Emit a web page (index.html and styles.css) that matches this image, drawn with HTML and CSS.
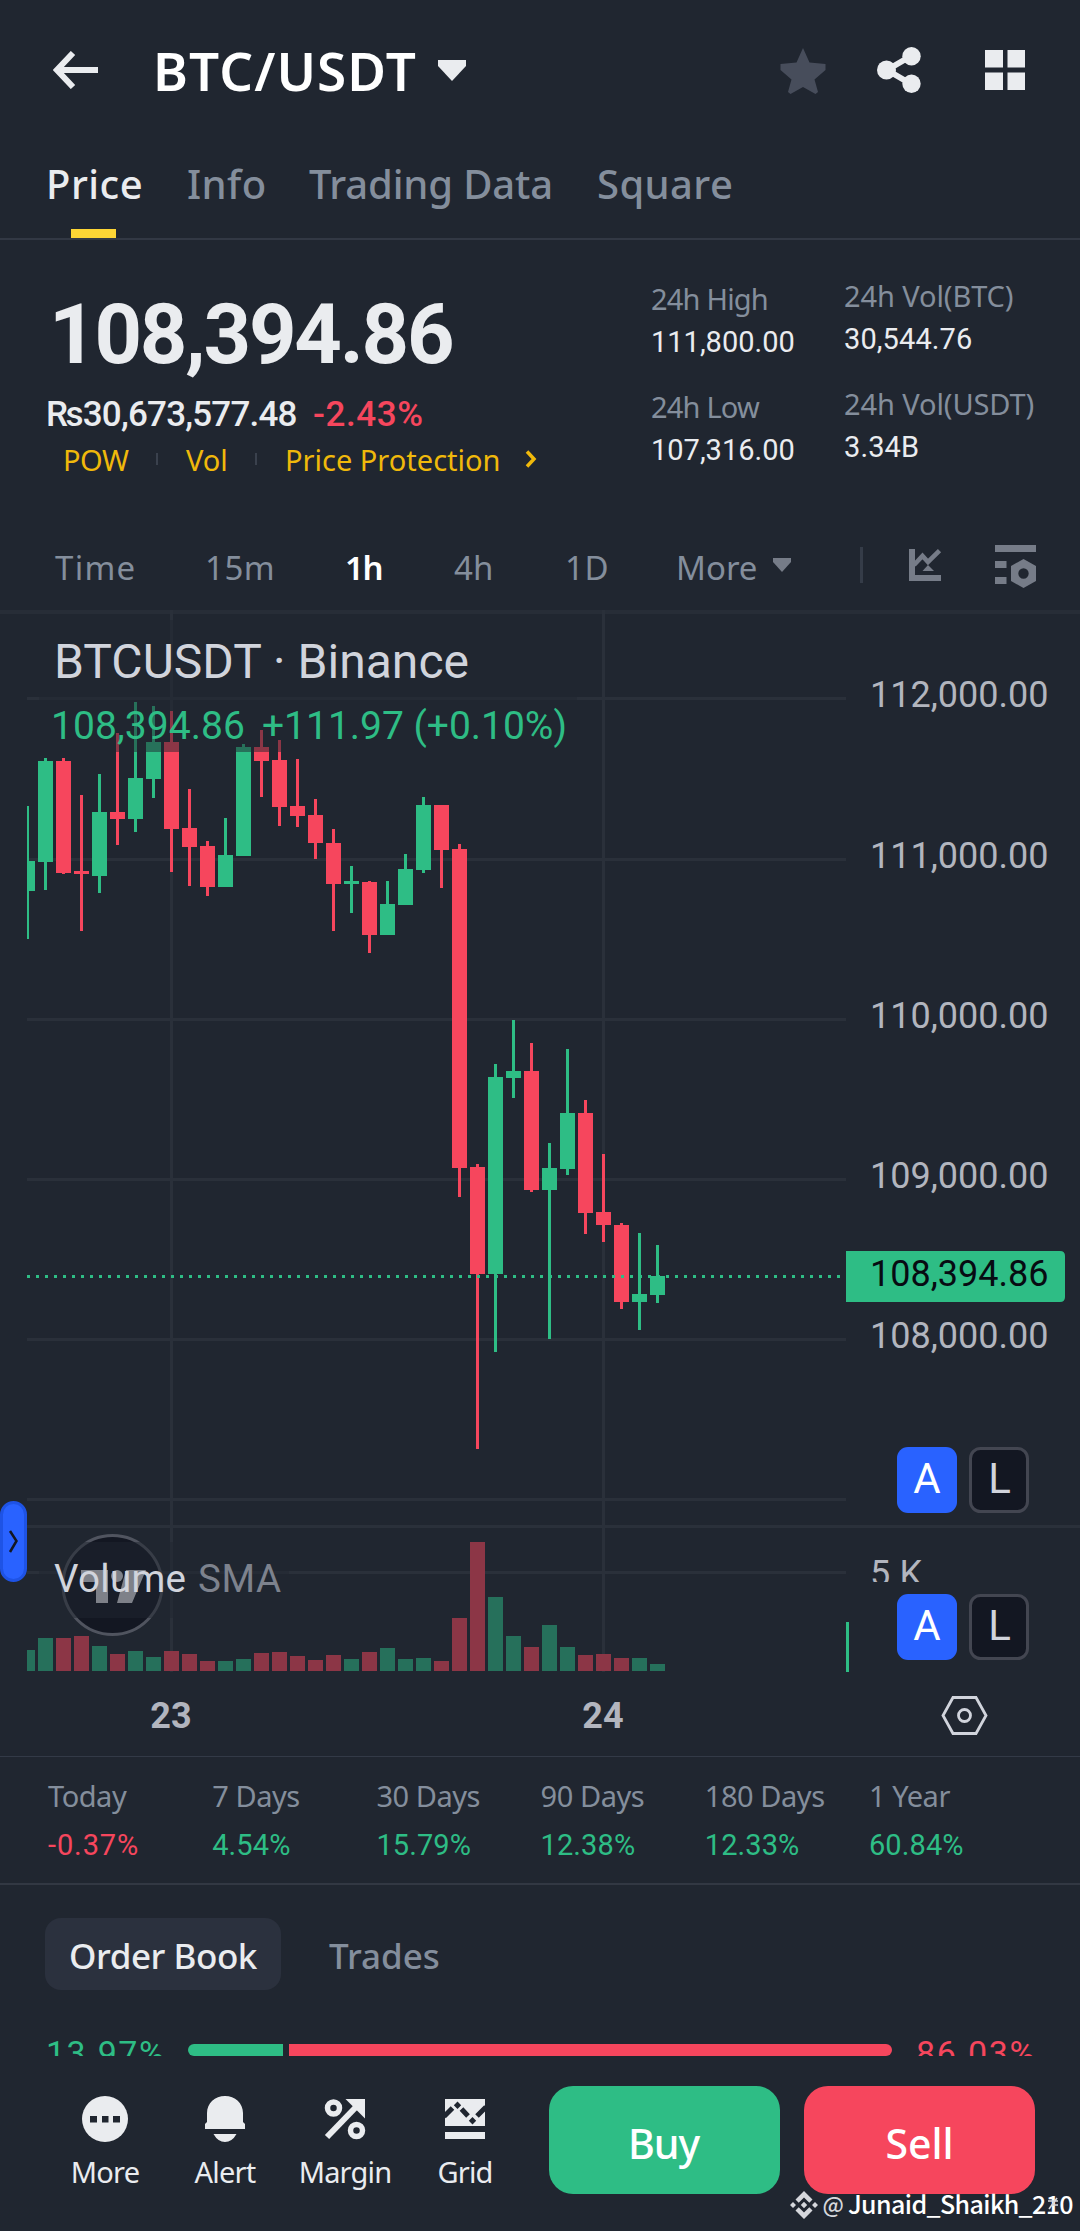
FILE: index.html
```html
<!DOCTYPE html>
<html lang="en">
<head>
<meta charset="utf-8">
<title>BTC/USDT</title>
<link rel="stylesheet" href="styles.css">
</head>
<body>
<main class="app">
  <header class="topbar">
    <svg class="icon-back" width="46" height="38" viewBox="0 0 46 38"><path d="M3 19H45M20 2L4 19L20 36" fill="none" stroke="#eaecef" stroke-width="6"/></svg>
    <h1 class="pair">BTC/USDT</h1>
    <svg class="pair-caret" width="28" height="21" viewBox="0 0 28 21"><path d="M0 0H28V6L14 21L0 6Z" fill="#eaecef"/></svg>
    <div class="topbar-actions">
      <svg width="46" height="46" viewBox="0 0 46 46"><path d="M23 0L29.5 14.5L45.5 16V22L34.5 31.500L38 44L35.500 46L23 39L10.500 46L8 44L11.500 31.500L0.500 22V16L16.500 14.500Z" fill="#474d5b"/></svg>
      <svg width="44" height="46" viewBox="0 0 44 46"><path d="M10 23L34 9M10 23L34 37" stroke="#eaecef" stroke-width="6"/><circle cx="9.500" cy="23" r="9.500" fill="#eaecef"/><circle cx="34.500" cy="9.200" r="9.200" fill="#eaecef"/><circle cx="34.500" cy="36.800" r="9.200" fill="#eaecef"/></svg>
      <svg width="40" height="40" viewBox="0 0 40 40"><path d="M0 0H18V17.500H0ZM22.500 0H40V17.500H22.500ZM0 22.500H18V40H0ZM22.500 22.500H40V40H22.500Z" fill="#eaecef"/></svg>
    </div>
  </header>

  <nav class="tabs">
    <a class="tab tab-price active">Price</a>
    <a class="tab tab-info">Info</a>
    <a class="tab tab-data">Trading Data</a>
    <a class="tab tab-square">Square</a>
  </nav>

  <section class="summary">
    <div class="summary-main">
      <div class="last-price">108,394.86</div>
      <div class="fiat"><span class="fiat-value">₨30,673,577.48</span><span class="fiat-change">-2.43%</span></div>
      <div class="tags">
        <span class="tag-pow">POW</span><i class="tag-sep"></i><span class="tag-vol">Vol</span><i class="tag-sep"></i><span class="tag-protect">Price Protection</span>
        <svg width="12" height="18" viewBox="0 0 12 18"><path d="M2 1.500L9 9L2 16.500" fill="none" stroke="#f0b90b" stroke-width="3.500"/></svg>
      </div>
    </div>
    <div class="stats stats-range">
      <div class="stat"><span class="stat-label">24h High</span><span class="stat-value">111,800.00</span></div>
      <div class="stat"><span class="stat-label">24h Low</span><span class="stat-value">107,316.00</span></div>
    </div>
    <div class="stats stats-volume">
      <div class="stat"><span class="stat-label">24h Vol(BTC)</span><span class="stat-value">30,544.76</span></div>
      <div class="stat"><span class="stat-label">24h Vol(USDT)</span><span class="stat-value">3.34B</span></div>
    </div>
  </section>

  <nav class="intervals">
    <a class="iv-time">Time</a><a class="iv-15m">15m</a><a class="iv-1h active">1h</a><a class="iv-4h">4h</a><a class="iv-1d">1D</a><a class="iv-more">More</a>
    <svg class="iv-caret" width="18" height="14" viewBox="0 0 18 14"><path d="M0 0H18V4L9 14L0 4Z" fill="#767c88"/></svg>
    <i class="iv-sep"></i>
    <svg class="iv-chart" width="34" height="34" viewBox="0 0 34 34"><path d="M3 1V30H32" fill="none" stroke="#767c88" stroke-width="6"/><path d="M5 17L13.500 8L19 14L30.500 2.700" fill="none" stroke="#767c88" stroke-width="4.600"/><path d="M19 17L25 23H13.500Z" fill="#767c88"/></svg>
    <svg class="iv-settings" width="42" height="43" viewBox="0 0 42 43"><path d="M0 0H41V7H0ZM0 16H11.500V23H0ZM0 32H11.500V39H0Z" fill="#767c88"/><path fill-rule="evenodd" d="M28.500 14L41 21V36L28.500 43L16 36V21ZM28.500 23.300A5.200 5.200 0 1 0 28.500 33.700A5.200 5.200 0 1 0 28.500 23.300Z" fill="#767c88"/></svg>
  </nav>

  <section class="chart">
    <svg id="chart" width="1080" height="1147" viewBox="0 610 1080 1147">
      <g fill="#2a303a">
        <rect x="0" y="610" width="1080" height="4" fill="#272d37"/>
        <rect x="27" y="697" width="819" height="3"/>
        <rect x="27" y="858" width="819" height="3"/>
        <rect x="27" y="1018" width="819" height="3"/>
        <rect x="27" y="1178" width="819" height="3"/>
        <rect x="27" y="1338" width="819" height="3"/>
        <rect x="27" y="1498" width="819" height="3"/>
        <rect x="27" y="1525" width="1053" height="3"/>
        <rect x="27" y="1571" width="819" height="3"/>
        <rect x="170" y="610" width="3" height="1062"/>
        <rect x="602" y="610" width="3" height="1062"/>
      </g>
      <circle cx="112.500" cy="1585" r="49.500" fill="#131722" stroke="#50545f" stroke-width="3"/>
      <path d="M81 1570H108V1603H96V1582H81ZM126 1570H146L132 1603H117Z" fill="#dcdde2"/>
      <circle cx="117" cy="1576" r="6" fill="#dcdde2"/>
      <g id="series"></g>
      <path d="M27 1276.500H842" stroke="#2ebd85" stroke-width="3" stroke-dasharray="3 6"/>
      <g fill="#202630" fill-opacity=".5">
        <rect x="39" y="620" width="441" height="77"/>
        <rect x="39" y="697" width="538" height="55"/>
        <rect x="39" y="1542" width="250" height="76"/>
      </g>
      <g class="chart-text">
        <text x="54" y="678" font-size="48" textLength="415" fill="#d1d4dc">BTCUSDT · Binance</text>
        <text x="51" y="739" font-size="39" textLength="194" fill="#2ebd85">108,394.86</text>
        <text x="262" y="739" font-size="39" textLength="305" fill="#2ebd85">+111.97 (+0.10%)</text>
        <text x="54" y="1592" font-size="38.500" textLength="132" fill="#d1d4dc">Volume</text>
        <text x="198" y="1592" font-size="38.500" textLength="83" fill="#7d828d">SMA</text>
        <g fill="#b2b5be" font-size="36">
          <text x="870" y="707" textLength="178.500">112,000.00</text>
          <text x="870" y="868" textLength="178.500">111,000.00</text>
          <text x="870" y="1028" textLength="178.500">110,000.00</text>
          <text x="870" y="1188" textLength="178.500">109,000.00</text>
          <text x="870" y="1348" textLength="178.500">108,000.00</text>
          <text x="870" y="1586" textLength="52">5 K</text>
          <text x="171" y="1728" text-anchor="middle" font-weight="700">23</text>
          <text x="603" y="1728" text-anchor="middle" font-weight="700">24</text>
        </g>
        <rect x="860" y="1582" width="80" height="12" fill="#202630"/>
        <path d="M846 1251H1060Q1065 1251 1065 1256V1297Q1065 1302 1060 1302H846Z" fill="#2ebd85"/>
        <text x="870" y="1286" font-size="36" textLength="178.500" fill="#070b12">108,394.86</text>
        <g id="scale-price" font-size="42" text-anchor="middle">
          <rect x="897" y="1447" width="60" height="66" rx="11" fill="#2962ff"/>
          <rect x="970.500" y="1448.500" width="57" height="63" rx="10" fill="#131722" stroke="#434651" stroke-width="3"/>
          <text x="927" y="1493" fill="#ffffff">A</text><text x="999.500" y="1493" fill="#d1d4dc">L</text>
        </g>
        <g id="scale-volume" font-size="42" text-anchor="middle">
          <rect x="897" y="1594" width="60" height="66" rx="11" fill="#2962ff"/>
          <rect x="970.500" y="1595.500" width="57" height="63" rx="10" fill="#131722" stroke="#434651" stroke-width="3"/>
          <text x="927" y="1640" fill="#ffffff">A</text><text x="999.500" y="1640" fill="#d1d4dc">L</text>
        </g>
      </g>
      <rect x="846" y="1622" width="3" height="50" fill="#2ebd85"/>
      <path d="M953 1697.500H976L986 1715.500L976 1733.500H953L943 1715.500Z" fill="none" stroke="#d1d4dc" stroke-width="2.800"/>
      <circle cx="964.500" cy="1715.500" r="6" fill="none" stroke="#d1d4dc" stroke-width="2.800"/>
      <rect x="1.500" y="1502.500" width="24" height="78" rx="12" fill="#2962ff" stroke="#1e53e5" stroke-width="3"/>
      <path d="M10 1531L16.500 1541L10 1552" fill="none" stroke="#131722" stroke-width="2.500"/>
    </svg>
  </section>

  <section class="returns">
    <div class="ret"><span>Today</span><b class="down">-0.37%</b></div>
    <div class="ret"><span>7 Days</span><b>4.54%</b></div>
    <div class="ret"><span>30 Days</span><b>15.79%</b></div>
    <div class="ret"><span>90 Days</span><b>12.38%</b></div>
    <div class="ret"><span>180 Days</span><b>12.33%</b></div>
    <div class="ret"><span>1 Year</span><b>60.84%</b></div>
  </section>

  <nav class="book-tabs"><a class="book-tab active">Order Book</a><a class="book-tab">Trades</a></nav>

  <section class="depth">
    <span class="depth-buy">13.97%</span>
    <div class="depth-bar"><i class="bar-buy"></i><i class="bar-sell"></i></div>
    <span class="depth-sell">86.03%</span>
  </section>

  <footer class="bottombar">
    <a class="tool">
      <svg width="46" height="46" viewBox="0 0 46 46"><circle cx="23" cy="23" r="23" fill="#eaecef"/><path d="M8 20H15V26.500H8ZM20 20H26.500V26.500H20ZM31 20H38V26.500H31Z" fill="#202630"/></svg>
      <span>More</span></a>
    <a class="tool">
      <svg width="46" height="46" viewBox="0 0 46 46"><path d="M5 17C5 7 13 0 23 0S41 7 41 17V26L43 28V33H3V28L5 26ZM11.500 38H34.500Q30 46 23 46T11.500 38Z" fill="#eaecef"/></svg>
      <span>Alert</span></a>
    <a class="tool">
      <svg width="46" height="46" viewBox="0 0 46 46"><circle cx="11.500" cy="12" r="6" fill="none" stroke="#eaecef" stroke-width="5.500"/><circle cx="34.500" cy="34.500" r="6" fill="none" stroke="#eaecef" stroke-width="5.500"/><path d="M5 41L34 11" stroke="#eaecef" stroke-width="6"/><path d="M23.500 3H43V22.500Z" fill="#eaecef"/></svg>
      <span>Margin</span></a>
    <a class="tool">
      <svg width="46" height="46" viewBox="0 0 46 46"><path d="M3 3H43V30H3ZM3 36H43V43H3Z" fill="#eaecef"/><path d="M2 20.500L10.500 12M19.500 13L26 20M35 20L44 11" fill="none" stroke="#202630" stroke-width="5"/><path d="M15.500 5.500L19.200 9.200L15.500 12.900L11.800 9.200ZM30.500 21L34.200 24.700L30.500 28.400L26.800 24.700Z" fill="#202630"/></svg>
      <span>Grid</span></a>
    <button class="trade buy">Buy</button>
    <button class="trade sell">Sell</button>
  </footer>

  <div class="watermark">
    <svg width="28" height="28" viewBox="0 0 28 28"><path d="M14 0L22.500 8.500L19.300 11.700L14 6.400L8.700 11.700L5.500 8.500ZM14 28L22.500 19.500L19.300 16.300L14 21.600L8.700 16.300L5.500 19.500ZM3 11L6 14L3 17L0 14ZM25 11L28 14L25 17L22 14ZM14 10.800L17.200 14L14 17.200L10.800 14Z" fill="#d5d7dc"/></svg>
    <span class="wm-at">@</span><span class="wm-name">Junaid_Shaikh_210</span>
    <svg class="wm-mark" width="12" height="14" viewBox="0 0 12 14"><path d="M10 1L2 12M1 4H11M5 8H11" stroke="#d5d7dc" stroke-width="1.600"/></svg>
  </div>
</main>
<script src="chart.js"></script>
</body>
</html>
```
FILE: styles.css
```css
* { box-sizing: border-box; }
body { margin: 0; background: #202630; }
.app {
  position: relative; width: 1080px; height: 2231px; overflow: hidden;
  display: flex; flex-direction: column;
  background: #202630; color: #eaecef;
  font-family: "Noto Sans", "Open Sans", sans-serif;
}
.app > * { flex: none; }
svg { display: block; flex: none; }
a, span { white-space: nowrap; }

.topbar { height: 140px; display: flex; align-items: center; padding: 0 55px 0 53px; }
.pair { margin: 0 0 0 54px; width: 285px; font-size: 53px; line-height: 72px; font-weight: 600; color: #fff; letter-spacing: 1.1px; padding-top: 2px; }
.topbar-actions { margin-left: auto; display: flex; align-items: center; gap: 53px; }
.topbar-actions svg:first-child { margin-right: -2px; margin-top: 2px; }
.topbar-actions svg:last-child { margin-left: 11px; }

.tabs { height: 100px; display: flex; padding-left: 46px; border-bottom: 2px solid #323844; }
.tab { position: relative; height: 98px; font-size: 40px; line-height: 88px; font-weight: 500; color: #848e9c; }
.tab.active { color: #eaecef; letter-spacing: .5px; }
.tab.active::after { content: ""; position: absolute; left: 25px; bottom: 0; width: 45px; height: 9px; background: #fdd535; }
.tab-price { width: 141px; }
.tab-info { width: 122px; letter-spacing: .4px; }
.tab-data { width: 288px; letter-spacing: -.15px; }
.tab-square { letter-spacing: .4px; }

.summary { height: 270px; display: flex; }
.summary-main { width: 651px; padding-left: 46px; }
.last-price { height: 112px; padding: 42px 0 0 3px; font: 700 83px/106px Roboto, sans-serif; letter-spacing: -2.200px; }
.fiat { display: flex; gap: 16px; margin-top: 41px; height: 44px; font: 500 35px/44px Roboto, sans-serif; }
.fiat-value { width: 251px; letter-spacing: -.8px; }
.fiat-change { color: #f6465d; letter-spacing: .6px; }
.tags { display: flex; align-items: center; height: 48px; padding-left: 17px; margin-top: -2px; font-size: 29px; color: #f0b90b; }
.tag-sep { width: 2px; height: 12px; background: #3a414d; }
.tag-pow { width: 93px; letter-spacing: -.5px; }
.tag-vol { width: 69px; margin-left: 28px; }
.tag-protect { width: 240px; margin-left: 28px; }
.stats { display: flex; flex-direction: column; }
.stats-range { width: 193px; padding-top: 38px; }
.stats-volume { padding-top: 35px; }
.stat { display: flex; flex-direction: column; height: 108px; }
.stat-label { font-size: 29px; line-height: 42px; color: #848e9c; letter-spacing: -.8px; }
.stats-volume .stat-label { letter-spacing: -.1px; }
.stat-value { margin-top: 1px; font: 400 29px/42px Roboto, sans-serif; color: #eaecef; }
.stats-volume .stat-value { letter-spacing: .1px; }

.intervals { height: 100px; display: flex; padding-left: 55px; font-size: 33px; line-height: 116px; color: #848e9c; }
.intervals .active { color: #fff; font-weight: 600; letter-spacing: -1.500px; }
.iv-time { width: 150px; letter-spacing: 1.300px; }
.iv-15m { width: 140px; letter-spacing: .5px; }
.iv-1h { width: 109px; }
.iv-4h { width: 111px; }
.iv-1d { width: 111px; letter-spacing: .5px; }
.iv-more { width: 97px; }
.iv-caret { margin-top: 48px; }
.iv-sep { width: 3px; height: 36px; margin: 37px 46px 0 69px; background: #353c48; }
.iv-chart { margin-top: 38px; }
.iv-settings { margin: 35px 0 0 52px; }

.chart { height: 1147px; border-bottom: 1px solid #333a47; }
.chart-text { font-family: Roboto, sans-serif; }

.returns { height: 128px; display: grid; grid-template-columns: repeat(6, 164.200px); padding: 18px 0 0 48px; border-bottom: 2px solid #323843; }
.ret { display: flex; flex-direction: column; font-size: 29px; line-height: 42px; color: #848e9c; letter-spacing: -.45px; }
.ret b { margin-top: 7px; font: 400 29px/42px Roboto, sans-serif; color: #2ebd85; letter-spacing: .1px; }
.ret .down { color: #f6465d; letter-spacing: .9px; }

.book-tabs { display: flex; padding: 33px 0 0 45px; height: 150px; }
.book-tab { height: 72px; padding: 0 24px; border-radius: 16px; font-size: 35px; line-height: 75px; font-weight: 500; color: #848e9c; margin-right: 24px; }
.book-tab.active { width: 236px; background: #2b313e; color: #eaecef; letter-spacing: -.45px; }

.depth { height: 21px; overflow: hidden; display: flex; padding-left: 46px; font: 400 34px/36px Roboto, sans-serif; }
.depth > * { flex: none; }
.depth-buy { width: 142px; color: #2ebd85; letter-spacing: 1.500px; }
.depth-bar { width: 704px; height: 12px; margin-top: 9px; display: flex; gap: 6px; }
.bar-buy { width: 95px; background: #2ebd85; border-radius: 6px 0 0 6px; }
.bar-sell { flex: 1; background: #f6465d; border-radius: 0 6px 6px 0; }
.depth-sell { padding-left: 24px; color: #f6465d; letter-spacing: 1.600px; }

.bottombar { height: 175px; display: flex; padding: 30px 45px 0; }
.tool { width: 120px; height: 110px; padding-top: 10px; display: flex; flex-direction: column; align-items: center; font-size: 29px; line-height: 40px; color: #eaecef; letter-spacing: -.8px; }
.tool span { margin-top: 10px; }
.trade { width: 231px; height: 108px; border: 0; border-radius: 24px; padding: 5px 0 0; font: 500 41px/56px "Noto Sans", sans-serif; color: #fff; }
.buy { margin-left: 24px; padding-right: 2px; background: #2ebd85; letter-spacing: -1px; }
.sell { margin-left: 24px; background: #f6465d; }

.watermark { position: absolute; right: 7px; top: 2184px; height: 38px; display: flex; align-items: center; font: 500 25px/38px "Noto Sans CJK SC", sans-serif; color: #fff; }
.watermark svg { margin-top: 4px; }
.wm-at { margin: 0 4px 0 5px; font-size: 22px; color: #d5d7dc; }
.wm-name { letter-spacing: -.6px; }
.watermark .wm-mark { position: absolute; right: 14px; top: 13px; margin: 0; }
```
FILE: chart.js
```javascript
// Each row: direction, body top, body bottom, high, low, volume top
const candles = [
  ["u",861,891,806,939,1650],["u",761,862,758,890,1638],["d",761,873,758,874,1638],["d",871,874,795,931,1636],
  ["u",812,876,774,893,1646],["d",812,819,733,845,1654],["u",778,819,702,832,1651],["u",742,779,706,798,1657],
  ["d",742,829,711,872,1651],["d",828,847,789,886,1654],["d",846,887,841,896,1661],["u",855,887,818,887,1661],
  ["u",747,856,744,856,1659],["d",747,761,730,797,1653],["d",760,807,740,826,1652],["d",806,816,759,827,1656],
  ["d",815,843,799,859,1660],["d",843,884,829,931,1655],["u",881,884,866,913,1659],["d",882,935,881,953,1652],
  ["u",904,935,881,935,1648],["u",869,905,854,905,1659],["u",805,870,797,873,1658],["d",805,850,805,888,1661],
  ["d",849,1168,844,1197,1618],["d",1167,1274,1164,1449,1542],["u",1077,1274,1064,1352,1597],["u",1071,1078,1020,1098,1636],
  ["d",1071,1190,1043,1192,1647],["u",1168,1190,1143,1339,1625],["u",1113,1169,1049,1175,1647],["d",1113,1213,1100,1234,1655],
  ["d",1212,1225,1154,1242,1654],["d",1225,1302,1223,1309,1658],["u",1294,1302,1233,1330,1658],["u",1276,1295,1245,1303,1664]
];
const series = document.getElementById("series");
const plotLeft = 27;
function bar(x, y, w, h, fill) {
  const left = Math.max(x, plotLeft);
  const r = document.createElementNS("http://www.w3.org/2000/svg", "rect");
  r.setAttribute("x", left);
  r.setAttribute("y", y);
  r.setAttribute("width", x + w - left);
  r.setAttribute("height", h);
  r.setAttribute("fill", fill);
  series.appendChild(r);
}
candles.forEach(([dir, top, bottom, high, low, vol], i) => {
  const x = 20 + 18 * i;
  const up = dir === "u";
  bar(x + 6, high, 3, low - high, up ? "#2ebd85" : "#f6465d");
  bar(x, top, 15, bottom - top, up ? "#2ebd85" : "#f6465d");
  bar(x, vol, 15, 1671 - vol, up ? "#26705b" : "#8c3646");
});
```
